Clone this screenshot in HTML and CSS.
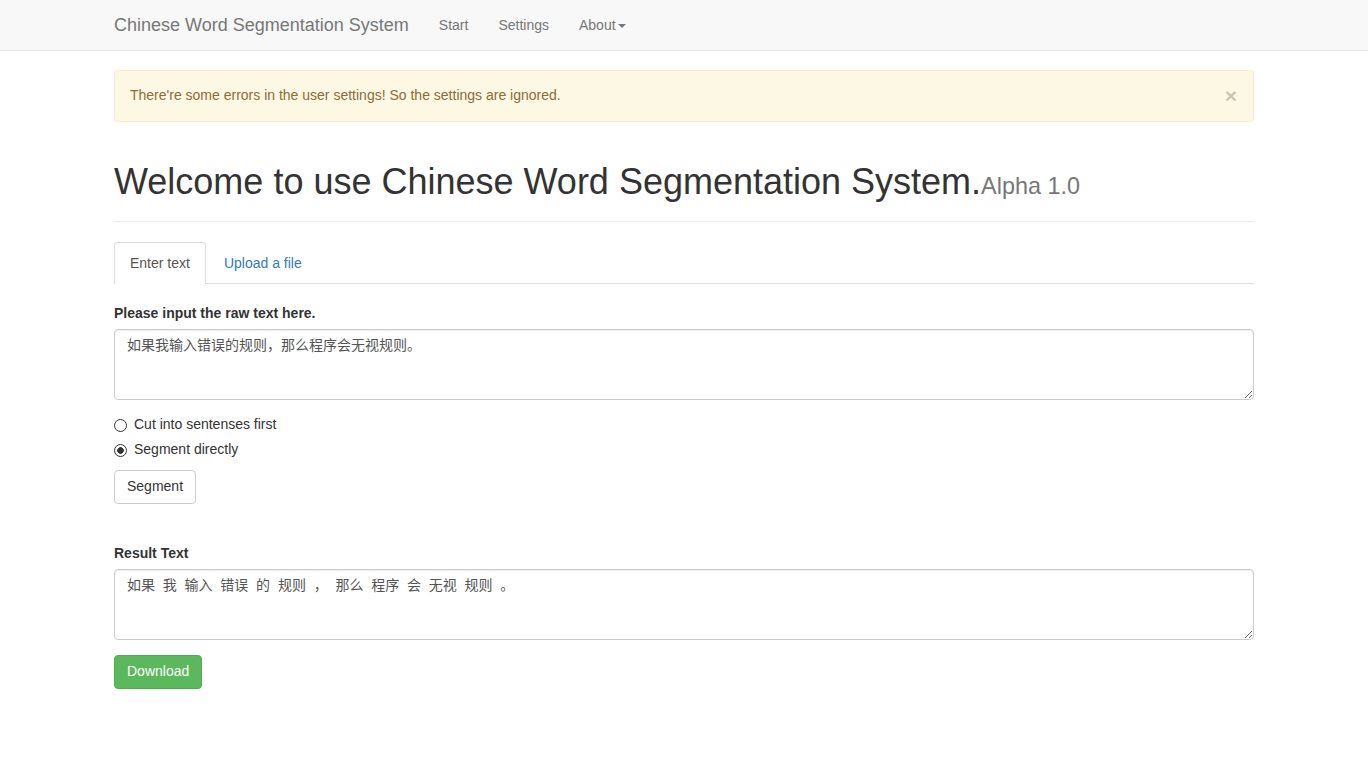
FILE: index.html
```html
<!DOCTYPE html>
<html lang="en">
<head>
<meta charset="utf-8">
<title>Chinese Word Segmentation System</title>
<link rel="stylesheet" href="styles.css">
</head>
<body>
<nav class="navbar">
  <div class="container navbar-inner">
    <a class="navbar-brand" href="#">Chinese Word Segmentation System</a>
    <ul class="nav">
      <li><a href="#">Start</a></li>
      <li><a href="#">Settings</a></li>
      <li><a href="#">About<span class="caret"></span></a></li>
    </ul>
  </div>
</nav>

<main class="container">
  <div class="alert">
    <span>There're some errors in the user settings! So the settings are ignored.</span>
    <button class="close" type="button">&times;</button>
  </div>

  <div class="page-header">
    <h1>Welcome to use Chinese Word Segmentation System.<small>Alpha 1.0</small></h1>
  </div>

  <ul class="nav-tabs">
    <li class="active"><a href="#">Enter text</a></li>
    <li><a href="#">Upload a file</a></li>
  </ul>

  <div class="tab-content">
    <div class="form-group">
      <label class="control-label">Please input the raw text here.</label>
      <textarea class="form-control">如果我输入错误的规则，那么程序会无视规则。</textarea>
    </div>
    <div class="radio"><label><input type="radio" name="mode"> Cut into sentenses first</label></div>
    <div class="radio"><label><input type="radio" name="mode" checked> Segment directly</label></div>
    <button class="btn btn-default" type="button">Segment</button>

    <div class="form-group result">
      <label class="control-label">Result Text</label>
      <textarea class="form-control">如果  我  输入  错误  的  规则  ，  那么  程序  会  无视  规则  。</textarea>
    </div>
    <button class="btn btn-success" type="button">Download</button>
  </div>
</main>
</body>
</html>
```

FILE: styles.css
```css
* { box-sizing: border-box; }
html, body { margin: 0; }
body {
  font-family: "Liberation Sans", Arial, "Noto Sans CJK SC", sans-serif;
  font-size: 14px;
  line-height: 1.42857;
  color: #333;
  background: #fff;
}
a { text-decoration: none; }

.container {
  width: 1170px;
  margin: 0 auto;
  padding: 0 15px;
}

.navbar {
  background: #f8f8f8;
  border-bottom: 1px solid #e7e7e7;
  min-height: 50px;
  margin-bottom: 19px;
}
.navbar-inner {
  display: flex;
  align-items: stretch;
  height: 50px;
}
.navbar-brand {
  margin-left: -15px;
  padding: 15px;
  font-size: 18px;
  line-height: 20px;
  color: #777;
}
.nav {
  display: flex;
  list-style: none;
  margin: 0;
  padding: 0;
}
.nav a {
  display: block;
  padding: 15px;
  line-height: 20px;
  color: #777;
}
.caret {
  display: inline-block;
  width: 0;
  height: 0;
  margin-left: 2px;
  vertical-align: middle;
  border-top: 4px dashed;
  border-right: 4px solid transparent;
  border-left: 4px solid transparent;
}

.alert {
  display: flex;
  justify-content: space-between;
  align-items: center;
  padding: 15px;
  margin-bottom: 20px;
  border: 1px solid #faebcc;
  border-radius: 4px;
  background: #fcf8e3;
  color: #8a6d3b;
}
.close {
  padding: 0;
  margin: 0 1px 0 0;
  border: 0;
  background: transparent;
  font-family: "Liberation Sans", Arial, sans-serif;
  font-size: 21px;
  font-weight: bold;
  line-height: 20px;
  color: #000;
  opacity: .2;
  text-shadow: 0 1px 0 #fff;
  cursor: pointer;
}

.page-header {
  padding-bottom: 9px;
  margin: 40px 0 20px;
  border-bottom: 1px solid #eee;
}
.page-header h1 {
  margin: 0 0 10px;
  font-size: 36px;
  font-weight: 500;
  line-height: 1.1;
  color: #333;
}
.page-header h1 small {
  font-size: 65%;
  font-weight: normal;
  color: #777;
}

.nav-tabs {
  display: flex;
  list-style: none;
  margin: 0;
  padding: 0;
  border-bottom: 1px solid #ddd;
}
.nav-tabs li { margin-bottom: -1px; }
.nav-tabs a {
  display: block;
  margin-right: 2px;
  padding: 10px 15px;
  line-height: 20px;
  border: 1px solid transparent;
  border-radius: 4px 4px 0 0;
  color: #337ab7;
}
.nav-tabs .active a {
  color: #555;
  background: #fff;
  border-color: #ddd #ddd transparent;
}

.tab-content { padding-top: 20px; }

.form-group { margin-bottom: 15px; }
.form-group.result { margin-top: 40px; }
.control-label {
  display: inline-block;
  margin-bottom: 5px;
  font-weight: bold;
}
.form-control {
  display: block;
  width: 100%;
  height: 71px;
  padding: 6px 12px;
  font-family: "Liberation Sans", Arial, "Noto Sans CJK SC", sans-serif;
  font-size: 14px;
  line-height: 1.42857;
  color: #555;
  background: #fff;
  border: 1px solid #ccc;
  border-radius: 4px;
  box-shadow: inset 0 1px 1px rgba(0,0,0,.075);
  resize: vertical;
}

.radio { margin: 10px 0; }
.radio + .radio { margin-top: -5px; }
.radio label {
  display: flex;
  align-items: center;
  min-height: 20px;
  font-weight: normal;
}
.radio input {
  appearance: none;
  -webkit-appearance: none;
  width: 13px;
  height: 13px;
  margin: 1px 7px 0 0;
  border: 1px solid #333;
  border-radius: 50%;
  background: #fff;
}
.radio input:checked {
  background: radial-gradient(circle, #333 0 3px, #fff 3.6px);
}

.btn {
  display: inline-block;
  padding: 6px 12px;
  font-family: "Liberation Sans", Arial, sans-serif;
  font-size: 14px;
  line-height: 1.42857;
  border: 1px solid transparent;
  border-radius: 4px;
  cursor: pointer;
}
.btn-default {
  color: #333;
  background: #fff;
  border-color: #ccc;
}
.btn-success {
  color: #fff;
  background: #5cb85c;
  border-color: #4cae4c;
}
```
